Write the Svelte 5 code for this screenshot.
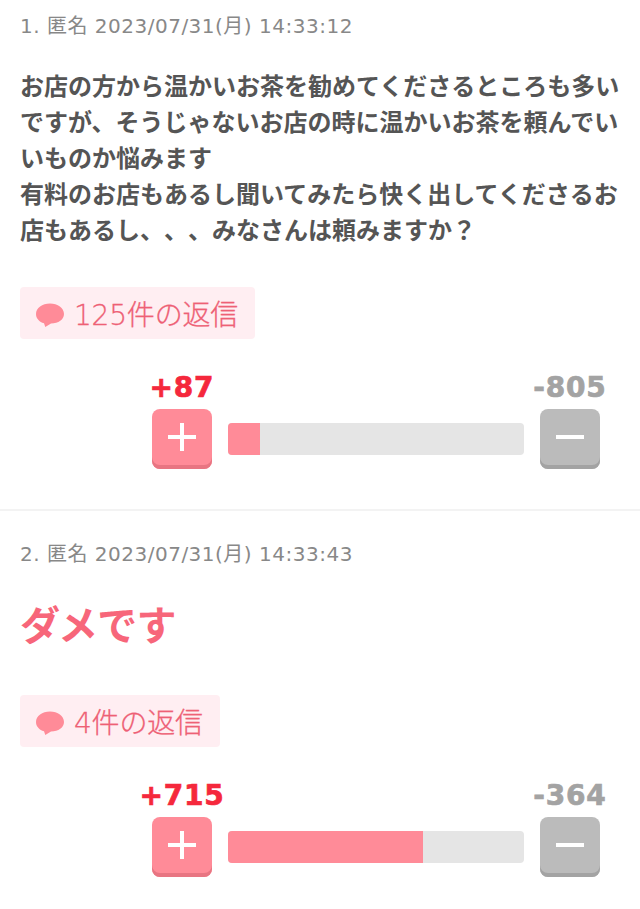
<script>
  const posts = [
    { no: 1, time: '2023/07/31(月) 14:33:12', lines: ['お店の方から温かいお茶を勧めてくださるところも多いですが、そうじゃないお店の時に温かいお茶を頼んでいいものか悩みます', '有料のお店もあるし聞いてみたら快く出してくださるお店もあるし、、、みなさんは頼みますか？'], big: false, replies: 125, plus: 87, minus: 805, pct: 10.8 },
    { no: 2, time: '2023/07/31(月) 14:33:43', lines: ['ダメです'], big: true, replies: 4, plus: 715, minus: 364, pct: 66 }
  ];
</script>

<main>
  {#each posts as p}
    <article class="post">
      <div class="meta">{p.no}. 匿名 {p.time}</div>
      <div class="body" class:big={p.big}>
        {#each p.lines as l}<div>{l}</div>{/each}
      </div>
      <div class="reply">
        <svg class="bubble" width="30" height="26" viewBox="0 0 30 26"><path d="M15 1.500C7.300 1.500 1 5.800 1 12c0 4.600 3.400 7.900 8 9.300l1.300 3.700 5.700-3.500c7.500-.2 13-3.900 13-9.500C29 5.800 22.700 1.500 15 1.500z" fill="#ff8b98"/></svg>
        <span>{p.replies}件の返信</span>
      </div>
      <div class="vote">
        <div class="side">
          <div class="num plus">+{p.plus}</div>
          <div class="btn pink"><svg width="30" height="30" viewBox="0 0 30 30"><path d="M15 1v28M1 15h28" stroke="#fff" stroke-width="4" fill="none"/></svg></div>
        </div>
        <div class="bar"><div class="fill" style="width:{p.pct}%"></div></div>
        <div class="side">
          <div class="num minus">-{p.minus}</div>
          <div class="btn gray"><svg width="30" height="30" viewBox="0 0 30 30"><path d="M1 15h28" stroke="#fff" stroke-width="4" fill="none"/></svg></div>
        </div>
      </div>
    </article>
  {/each}
</main>

<style>
  :global(body) { margin: 0; background: #fff; font-family: "DejaVu Sans", "Noto Sans CJK JP", sans-serif; }
  .post { padding: 12px 20px 40px; border-bottom: 2px solid #f3f3f3; }
  .post:last-child { border-bottom: none; padding-top: 29px; }
  .meta { font-size: 20px; line-height: 28px; color: #888; letter-spacing: .5px; }
  .body { margin-top: 29px; font-size: 24px; line-height: 36px; font-weight: 700; color: #555; text-spacing-trim: space-all; }
  .body.big { font-size: 40px; line-height: 60px; color: #f7667a; margin-top: 28px; letter-spacing: -.8px; }
  .reply { display: inline-flex; align-items: center; gap: 9px; height: 52px; margin-top: 38px; padding: 0 17px 0 15px; background: #ffeef2; border-radius: 4px; font-size: 28px; font-weight: 300; color: #ee6075; letter-spacing: -.2px; -webkit-text-stroke: .3px currentColor; }
  .big + .reply { margin-top: 39px; }
  .bubble { display: block; margin-top: 4px; }
  .vote { display: flex; align-items: flex-end; justify-content: flex-end; gap: 16px; margin-top: 31px; padding-right: 20px; }
  .side { width: 60px; display: flex; flex-direction: column; align-items: center; }
  .num { font-size: 28px; line-height: 36px; font-weight: 700; white-space: nowrap; margin: 0 -20px 3px; letter-spacing: .8px; -webkit-text-stroke: .7px currentColor; }
  .plus { color: #f5283c; }
  .minus { color: #a3a3a3; }
  .btn { width: 60px; height: 56px; border-radius: 8px; display: flex; align-items: center; justify-content: center; padding-bottom: 4px; }
  .pink { background: #ff8b98; box-shadow: inset 0 -4px 0 #e87582; }
  .gray { background: #bbb; box-shadow: inset 0 -4px 0 #a3a3a3; }
  .bar { width: 296px; height: 32px; margin-bottom: 14px; background: #e5e5e5; border-radius: 4px; overflow: hidden; }
  .fill { height: 100%; background: #ff8b98; }
</style>
